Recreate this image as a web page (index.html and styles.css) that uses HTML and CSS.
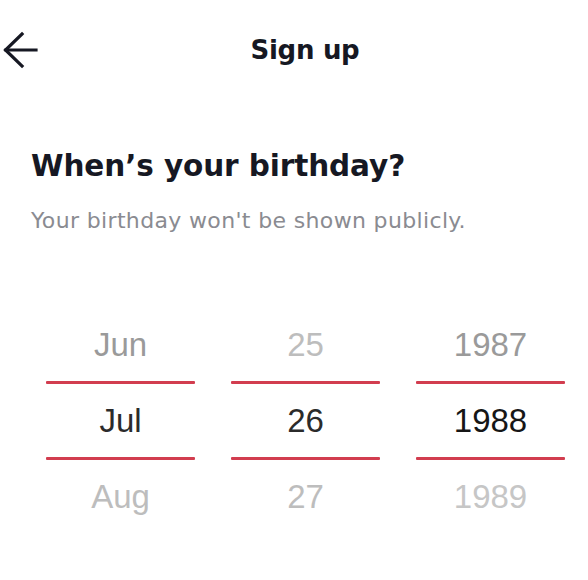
FILE: index.html
```html
<!DOCTYPE html>
<html lang="en">
<head>
<meta charset="utf-8">
<title>Sign up</title>
<link rel="stylesheet" href="styles.css">
</head>
<body>
<div class="screen">
  <header class="topbar">
    <button class="back" aria-label="Back">
      <svg width="40" height="40" viewBox="0 0 40 40" fill="none" stroke="#161823" stroke-width="3.2" stroke-linecap="square" stroke-linejoin="miter">
        <path d="M6 20 H36"/>
        <path d="M22 4 L5.5 20 L22 36"/>
      </svg>
    </button>
    <h1 class="title">Sign up</h1>
    <span class="spacer"></span>
  </header>

  <section class="intro">
    <h2 class="heading">When’s your birthday?</h2>
    <p class="sub">Your birthday won't be shown publicly.</p>
  </section>

  <section class="pickers">
    <div class="col">
      <div class="item prev">Jun</div>
      <div class="line"></div>
      <div class="item sel">Jul</div>
      <div class="line"></div>
      <div class="item next">Aug</div>
    </div>
    <div class="col">
      <div class="item prev light">25</div>
      <div class="line"></div>
      <div class="item sel">26</div>
      <div class="line"></div>
      <div class="item next">27</div>
    </div>
    <div class="col">
      <div class="item prev">1987</div>
      <div class="line"></div>
      <div class="item sel dark">1988</div>
      <div class="line"></div>
      <div class="item next lighter">1989</div>
    </div>
  </section>
</div>
</body>
</html>
```

FILE: styles.css
```css
* { box-sizing: border-box; }
html, body { margin: 0; padding: 0; background: #ffffff; }
body { font-family: "Liberation Sans", Arial, sans-serif; color: #161823; }

.screen { width: 588px; height: 580px; overflow: hidden; }

.topbar {
  display: grid;
  grid-template-columns: 60px 1fr 38px;
  align-items: center;
  height: 100px;
}
.back {
  border: 0; background: none; padding: 0; margin: 0;
  width: 40px; height: 40px; display: flex;
}
.title {
  margin: 0;
  text-align: center;
  font-family: "DejaVu Sans", sans-serif;
  font-size: 26px;
  font-weight: 700;
  letter-spacing: -0.3px;
  color: #161823;
}

.intro { padding: 48px 0 0 31px; }
.heading {
  margin: 0;
  font-family: "DejaVu Sans", sans-serif;
  font-size: 29.5px;
  font-weight: 700;
  letter-spacing: -0.1px;
  color: #161823;
  line-height: 36px;
}
.sub {
  margin: 25px 0 0;
  font-family: "DejaVu Sans", sans-serif;
  font-size: 22px;
  letter-spacing: 0.35px;
  line-height: 24px;
  color: #8a8b91;
}

.pickers {
  display: flex;
  gap: 36px;
  padding: 76px 0 0 46px;
}
.col { width: 149px; display: flex; flex-direction: column; }
.item {
  text-align: center;
  font-size: 33px;
  line-height: 73px;
  height: 73px;
  color: #9a9a9a;
}
.item.prev { height: 72px; line-height: 72px; }
.item.sel { color: #2b2b2b; }
.item.sel.dark { color: #161616; }
.item.next { color: #bdbdbd; }
.item.light { color: #bdbdbd; }
.item.lighter { color: #c6c6c6; }
.line { height: 3px; background: #d23d4f; border-radius: 1px; }
```
